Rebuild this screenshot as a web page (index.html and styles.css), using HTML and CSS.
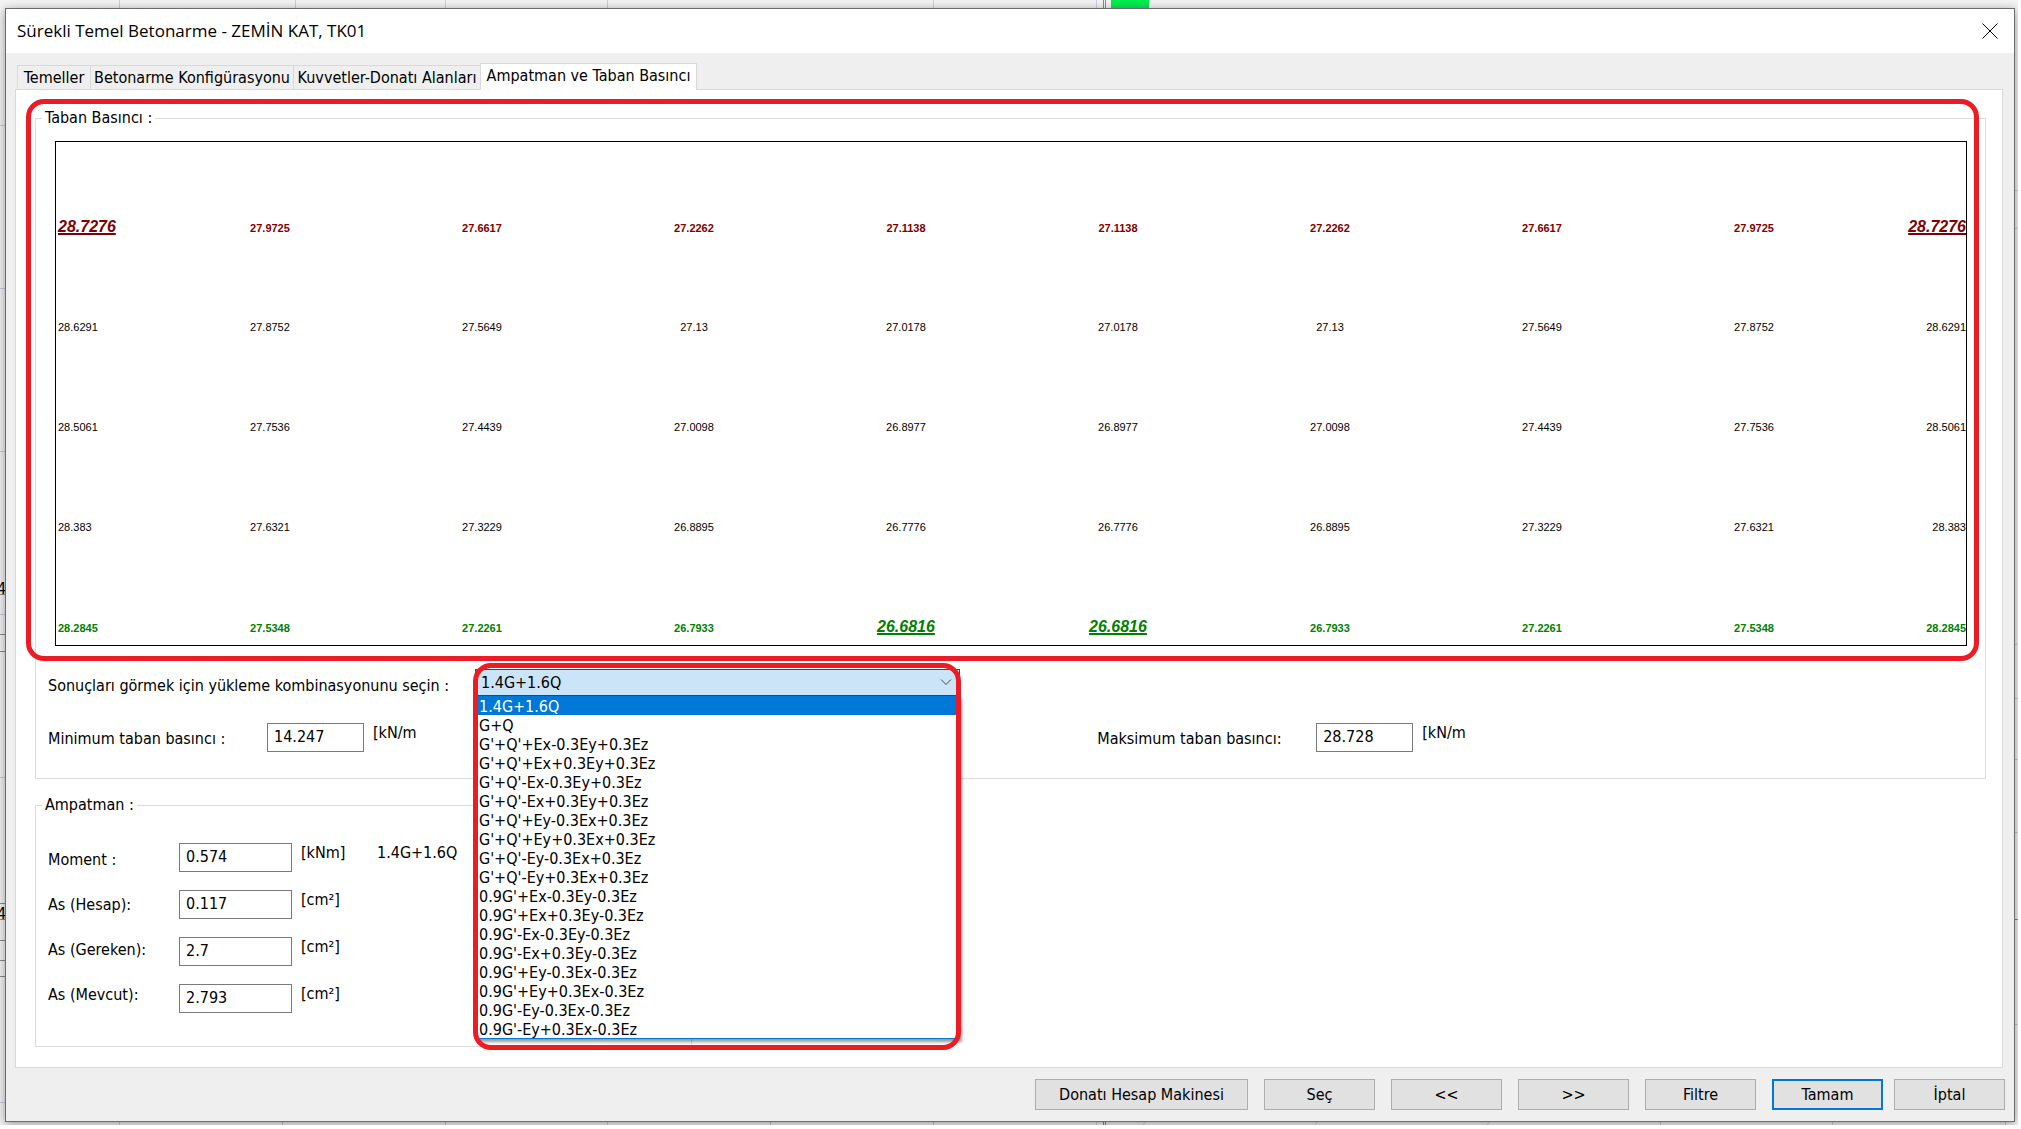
FILE: index.html
```html
<!DOCTYPE html>
<html lang="tr">
<head>
<meta charset="utf-8">
<title>Sürekli Temel Betonarme</title>
<link rel="stylesheet" href="styles.css">
</head>
<body>
<div class="desktop">
  <svg class="drawing" aria-hidden="true">
    <g class="thin">
      <path d="M119.500 0V1125M295.500 0V8M445.500 0V1125M607.500 0V1125M933.500 0V1125M1096.500 0V1125M282.500 1120V1125M770.500 1120V1125M1660.500 1120V1125M1832.500 1120V1125M2005.500 1120V1125"/>
      <path d="M0 125.500H6M0 288.500H6M0 451.500H6M0 614.500H6M0 777.500H6M0 1102.500H6"/>
      <path d="M2014 190.500H2018M2014 228.500H2018M2014 644.500H2018M2014 698.500H2018M2014 759.500H2018M2014 832.500H2018M2014 1024.500H2018"/>
      <path d="M1143 1125L1147 1120M1315 1125L1319 1120M1487 1125L1491 1120"/>
    </g>
    <g class="thick">
      <path d="M0 594.500H6M0 634.500H6M0 651.500H6M0 903.500H6M0 919.500H6M0 940.500H6M0 960.500H6M0 976.500H6M2014 919.500H2018"/>
      <path d="M1103.500 0V1125M1105.500 0V1125"/>
    </g>
    <rect class="beam" x="1111" y="0" width="38" height="8"/>
    <text x="-3" y="594">4</text>
    <text x="-3" y="919">4</text>
  </svg>

  <main class="dialog">
    <header class="titlebar">
      <h1>Sürekli Temel Betonarme - ZEMİN KAT, TK01</h1>
      <button class="close" type="button" aria-label="Kapat">
        <svg width="16" height="16" viewBox="0 0 16 16"><path d="M0.500 0.500L15.500 15.500M15.500 0.500L0.500 15.500"/></svg>
      </button>
    </header>

    <nav class="tabs" role="tablist">
      <button class="tab tab-s" type="button" role="tab">Temeller</button>
      <button class="tab tab-l" type="button" role="tab">Betonarme Konfigürasyonu</button>
      <button class="tab tab-m" type="button" role="tab">Kuvvetler-Donatı Alanları</button>
      <button class="tab tab-active" type="button" role="tab" aria-selected="true">Ampatman ve Taban Basıncı</button>
    </nav>

    <section class="pane">
      <fieldset class="group">
        <legend>Taban Basıncı :</legend>
        <div class="plot">
          <table class="values">
            <colgroup><col class="edge"><col span="8"><col class="edge"></colgroup>
            <tbody>
              <tr class="max"><td><em>28.7276</em></td><td>27.9725</td><td>27.6617</td><td>27.2262</td><td>27.1138</td><td>27.1138</td><td>27.2262</td><td>27.6617</td><td>27.9725</td><td><em>28.7276</em></td></tr>
              <tr><td>28.6291</td><td>27.8752</td><td>27.5649</td><td>27.13</td><td>27.0178</td><td>27.0178</td><td>27.13</td><td>27.5649</td><td>27.8752</td><td>28.6291</td></tr>
              <tr><td>28.5061</td><td>27.7536</td><td>27.4439</td><td>27.0098</td><td>26.8977</td><td>26.8977</td><td>27.0098</td><td>27.4439</td><td>27.7536</td><td>28.5061</td></tr>
              <tr><td>28.383</td><td>27.6321</td><td>27.3229</td><td>26.8895</td><td>26.7776</td><td>26.7776</td><td>26.8895</td><td>27.3229</td><td>27.6321</td><td>28.383</td></tr>
              <tr class="min"><td>28.2845</td><td>27.5348</td><td>27.2261</td><td>26.7933</td><td><em>26.6816</em></td><td><em>26.6816</em></td><td>26.7933</td><td>27.2261</td><td>27.5348</td><td>28.2845</td></tr>
            </tbody>
          </table>
        </div>

        <div class="combo-row">
          <label for="combo">Sonuçları görmek için yükleme kombinasyonunu seçin :</label>
          <div class="combo">
            <select id="combo"><option>1.4G+1.6Q</option></select>
            <svg class="chevron" width="12" height="7" viewBox="0 0 12 7"><path d="M1 0.500L6 5.500L11 0.500"/></svg>
            <ul class="list" role="listbox" aria-label="Yükleme kombinasyonları">
              <li role="option" aria-selected="true" class="selected">1.4G+1.6Q</li>
              <li role="option">G+Q</li>
              <li role="option">G'+Q'+Ex-0.3Ey+0.3Ez</li>
              <li role="option">G'+Q'+Ex+0.3Ey+0.3Ez</li>
              <li role="option">G'+Q'-Ex-0.3Ey+0.3Ez</li>
              <li role="option">G'+Q'-Ex+0.3Ey+0.3Ez</li>
              <li role="option">G'+Q'+Ey-0.3Ex+0.3Ez</li>
              <li role="option">G'+Q'+Ey+0.3Ex+0.3Ez</li>
              <li role="option">G'+Q'-Ey-0.3Ex+0.3Ez</li>
              <li role="option">G'+Q'-Ey+0.3Ex+0.3Ez</li>
              <li role="option">0.9G'+Ex-0.3Ey-0.3Ez</li>
              <li role="option">0.9G'+Ex+0.3Ey-0.3Ez</li>
              <li role="option">0.9G'-Ex-0.3Ey-0.3Ez</li>
              <li role="option">0.9G'-Ex+0.3Ey-0.3Ez</li>
              <li role="option">0.9G'+Ey-0.3Ex-0.3Ez</li>
              <li role="option">0.9G'+Ey+0.3Ex-0.3Ez</li>
              <li role="option">0.9G'-Ey-0.3Ex-0.3Ez</li>
              <li role="option">0.9G'-Ey+0.3Ex-0.3Ez</li>
            </ul>
            <div class="mark mark-combo"></div>
          </div>
        </div>

        <div class="limits">
          <div class="limit">
            <label for="pmin">Minimum taban basıncı :</label>
            <input id="pmin" type="text" value="14.247">
            <span>[kN/m</span>
          </div>
          <div class="limit">
            <label for="pmax">Maksimum taban basıncı:</label>
            <input id="pmax" type="text" value="28.728">
            <span>[kN/m</span>
          </div>
        </div>
      </fieldset>

      <fieldset class="group group-narrow">
        <legend>Ampatman :</legend>
        <div class="ampatman">
          <div class="stack stack-labels">
            <label for="moment">Moment :</label>
            <label for="hesap">As (Hesap):</label>
            <label for="gereken">As (Gereken):</label>
            <label for="mevcut">As (Mevcut):</label>
          </div>
          <div class="stack stack-inputs">
            <input id="moment" type="text" value="0.574">
            <input id="hesap" type="text" value="0.117">
            <input id="gereken" type="text" value="2.7">
            <input id="mevcut" type="text" value="2.793">
          </div>
          <div class="stack stack-units">
            <span>[kNm]</span>
            <span>[cm²]</span>
            <span>[cm²]</span>
            <span>[cm²]</span>
          </div>
          <span>1.4G+1.6Q</span>
        </div>
      </fieldset>
      <div class="mark mark-plot"></div>
    </section>

    <footer class="actions">
      <button class="btn btn-wide" type="button">Donatı Hesap Makinesi</button>
      <button class="btn" type="button">Seç</button>
      <button class="btn" type="button">&lt;&lt;</button>
      <button class="btn" type="button">&gt;&gt;</button>
      <button class="btn" type="button">Filtre</button>
      <div class="pair">
        <button class="btn btn-default" type="button">Tamam</button>
        <button class="btn" type="button">İptal</button>
      </div>
    </footer>
  </main>
</div>
</body>
</html>
```
FILE: styles.css
```css
* { box-sizing: border-box; }

body {
  margin: 0;
  background: #fff;
  color: #000;
  font: 16px/20px "DejaVu Sans Condensed", "DejaVu Sans", sans-serif;
}

button, input, select { font: inherit; color: inherit; }

.desktop {
  position: relative;
  display: flex;
  min-height: calc(100vh - 4px);
  margin: 0 3px 4px 0;
  padding: 8px 3px 3px 5px;
  background: #f5f5f5;
  overflow: hidden;
}

.drawing {
  position: absolute;
  inset: 0;
  width: 100%;
  height: 100%;
  font-size: 16px;
}
.drawing path { fill: none; }
.thin { stroke: #cdcde0; }
.thick { stroke: #8a8a8a; }
.beam { fill: #00f04c; }

.dialog {
  position: relative;
  flex: 1;
  display: flex;
  flex-direction: column;
  min-width: 0;
  border: 1px solid #6b6b6b;
  background: #efefef;
  box-shadow: 0 2px 10px rgba(0, 0, 0, 0.4);
}

.titlebar {
  display: flex;
  align-items: center;
  justify-content: space-between;
  height: 44px;
  padding: 0 16px 0 11px;
  background: #fff;
}
.titlebar h1 {
  margin: 0;
  font: 17px/24px "Open Sans", "Noto Sans", sans-serif;
}
.close {
  display: flex;
  padding: 0;
  border: 0;
  background: none;
}
.close path { stroke: #000; fill: none; }

.tabs {
  display: flex;
  align-items: flex-end;
  padding: 10px 11px 0;
}
.tab {
  height: 24px;
  padding: 0;
  border: 1px solid #d9d9d9;
  border-width: 1px 1px 0 0;
  background: #efefef;
  text-align: center;
  white-space: nowrap;
}
.tab-s { width: 74px; border-left-width: 1px; }
.tab-l { width: 203px; }
.tab-m { width: 186px; border-right-width: 0; }
.tab-active {
  position: relative;
  z-index: 1;
  width: 217px;
  height: 27px;
  margin-bottom: -1px;
  padding-bottom: 2px;
  border-left-width: 1px;
  background: #fff;
}

.pane {
  position: relative;
  flex: 1;
  margin: 0 11px 0 9px;
  padding: 18px 16px 20px 19px;
  border: 1px solid #d9d9d9;
  background: #fff;
}

.group {
  min-width: 0;
  margin: 0;
  padding: 0;
  border: 1px solid #dcdcdc;
}
.group legend { margin-left: 6px; padding: 0 3px; }
.group-narrow { width: 657px; margin-top: 16px; }

.plot {
  margin: 13px 18px 0 19px;
  padding: 75px 0 7px 2px;
  border: 1px solid #000;
}
.values {
  width: 100%;
  table-layout: fixed;
  border-collapse: collapse;
  font: 11px/20px "Liberation Sans", Arial, sans-serif;
}
.values .edge { width: 5.555%; }
.values tr { height: 100px; }
.values tr:last-child { height: 20px; }
.values td {
  padding: 0;
  vertical-align: baseline;
  text-align: center;
  white-space: nowrap;
}
.values td:first-child { text-align: left; }
.values td:last-child { text-align: right; }
.values em { font-size: 16px; text-decoration: underline 2px; }
.max { color: #800000; font-weight: bold; }
.min { color: #008000; font-weight: bold; }

.combo-row {
  display: flex;
  align-items: center;
  margin-top: 23px;
  padding-left: 12px;
}
.combo-row label { width: 427px; padding-top: 6px; }
.combo { position: relative; width: 485px; }
.combo select {
  display: block;
  width: 100%;
  height: 27px;
  padding: 0 5px;
  border: 1px solid #005499;
  border-radius: 0;
  background: #cce4f7;
  appearance: none;
}
.chevron {
  position: absolute;
  top: 10px;
  right: 8px;
  fill: none;
  stroke: #444;
}
.list {
  position: absolute;
  top: 27px;
  left: 1px;
  right: 1px;
  z-index: 1;
  margin: 0;
  padding: 0;
  border: 1px solid #0078d7;
  border-top: 0;
  background: #fff;
  box-shadow: 3px 3px 3px rgba(0, 0, 0, 0.4);
  list-style: none;
}
.list li { height: 19px; padding-left: 2px; line-height: 22px; }
.list .selected { background: #0078d7; color: #fff; }

.mark {
  position: absolute;
  z-index: 2;
  border: 5px solid #ed1c24;
  border-radius: 18px;
  pointer-events: none;
}
.mark-combo { top: -6px; left: -2px; right: -1px; height: 387px; }
.mark-plot { top: 9px; left: 10px; right: 23px; height: 562px; }

.limits {
  display: grid;
  grid-template-columns: 13fr 11fr;
  margin-top: 27px;
  padding: 0 0 26px 12px;
}
.limit { display: flex; align-items: flex-start; }
.limit label { width: 219px; padding-top: 6px; }
.limit input { width: 97px; margin-right: 9px; }

input {
  height: 29px;
  padding: 0 6px 3px;
  border: 1px solid #7a7a7a;
  border-radius: 0;
  background: #fff;
}

.ampatman {
  display: flex;
  align-items: flex-start;
  padding: 28px 0 33px 12px;
}
.stack { display: flex; flex-direction: column; }
.stack-labels { width: 131px; gap: 25px; padding-top: 7px; }
.stack-inputs { width: 113px; gap: 18px; }
.stack-units { width: 85px; gap: 27px; padding-left: 9px; }

.actions {
  display: flex;
  justify-content: flex-end;
  gap: 16px;
  padding: 11px 9px;
}
.pair { display: flex; gap: 11px; }
.btn {
  width: 111px;
  height: 31px;
  padding: 0;
  border: 1px solid #adadad;
  background: #e1e1e1;
}
.btn-wide { width: 213px; }
.btn-default { border: 2px solid #0078d7; }
```
